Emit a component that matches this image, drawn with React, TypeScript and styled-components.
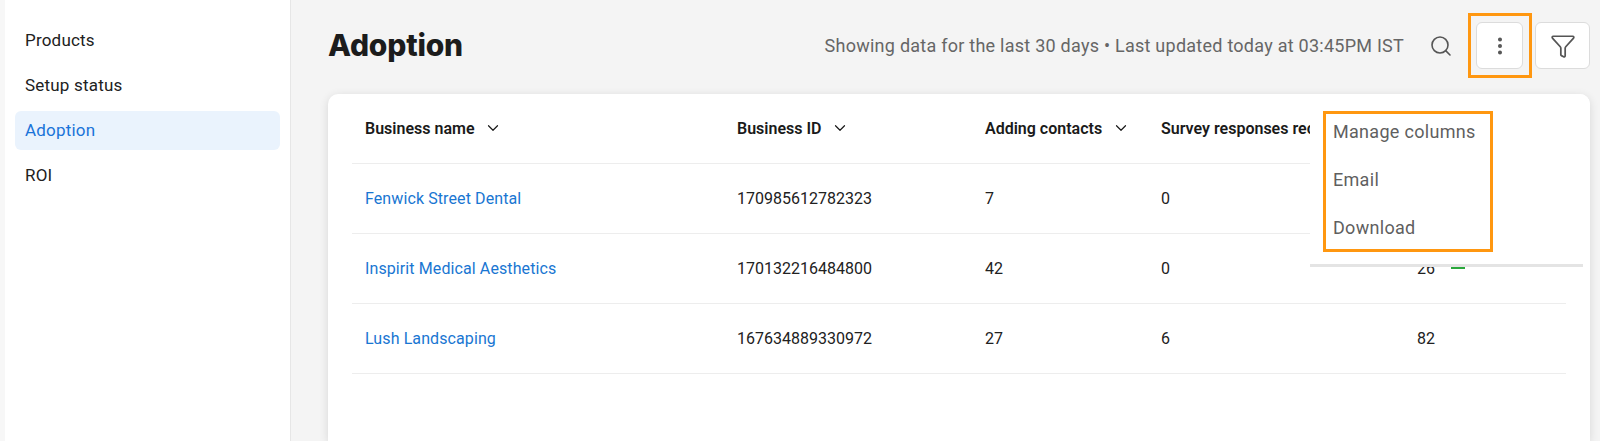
import React from "react";
import styled, { createGlobalStyle } from "styled-components";
import { Search, ChevronDown, EllipsisVertical, Funnel } from "lucide-react";

const GlobalStyle = createGlobalStyle`
  html, body {
    margin: 0;
    height: 100%;
    overflow: hidden;
    background: #f4f4f4;
    font-family: Roboto, "Liberation Sans", sans-serif;
    color: #212121;
  }
`;

const Shell = styled.div`
  display: grid;
  grid-template-columns: 291px 1fr;
  height: 441px;
  overflow: hidden;
`;

const Sidebar = styled.nav`
  display: flex;
  flex-direction: column;
  gap: 6px;
  padding: 21px 10px 0 15px;
  background: #fff;
  border-right: 1px solid #e6e6e6;
  box-shadow: inset 5px 0 0 #f7f7f7;
`;

const NavItem = styled.div<{ $active?: boolean }>`
  display: flex;
  align-items: center;
  box-sizing: border-box;
  height: 39px;
  padding: 0 0 2px 10px;
  border-radius: 6px;
  font-size: 17px;
  letter-spacing: 0.2px;
  color: ${(p) => (p.$active ? "#1a73d9" : "#212121")};
  background: ${(p) => (p.$active ? "#eaf3fd" : "transparent")};
`;

const Main = styled.main`
  display: flex;
  flex-direction: column;
  padding: 0 10px 0 37px;
  min-width: 0;
`;

const Header = styled.header`
  display: flex;
  align-items: center;
  height: 94px;
  padding-bottom: 3px;
  box-sizing: border-box;
`;

const Title = styled.h1`
  margin: -2px auto 0 0;
  font-family: Inter, sans-serif;
  font-size: 30px;
  font-weight: 800;
  letter-spacing: -0.2px;
  color: #1c1c1c;
`;

const Status = styled.span`
  font-size: 18px;
  color: #666;
  letter-spacing: 0.25px;
`;

const SearchIcon = styled(Search)`
  margin: 0 23px 0 25px;
  color: #555;
`;

const IconButton = styled.button<{ $flagged?: boolean }>`
  position: relative;
  display: flex;
  align-items: center;
  justify-content: center;
  width: ${(p) => (p.$flagged ? "47px" : "55px")};
  height: 47px;
  margin-left: ${(p) => (p.$flagged ? "0" : "12px")};
  padding: 0;
  background: #fff;
  border: 1px solid #dcdcdc;
  border-radius: 6px;
  color: #555;

  ${(p) =>
    p.$flagged &&
    `&::after {
      content: "";
      position: absolute;
      inset: -10px -10px -10px -9px;
      border: 3px solid #ff9710;
    }`}
`;

const Card = styled.section`
  position: relative;
  flex: 1;
  padding: 0 24px;
  background: #fff;
  border-radius: 10px 10px 0 0;
  box-shadow: 0 2px 10px rgba(0, 0, 0, 0.12);
  overflow: hidden;
`;

const Row = styled.div<{ $head?: boolean }>`
  display: grid;
  grid-template-columns: 372px 248px 176px 256px 1fr;
  align-items: center;
  box-sizing: content-box;
  height: 68px;
  padding: 0 0 1px 13px;
  border-bottom: 1px solid #ededed;
  font-size: 16px;
  font-weight: ${(p) => (p.$head ? 600 : 400)};
  color: ${(p) => (p.$head ? "#1a1a1a" : "#212121")};
  white-space: nowrap;
`;

const HeadCell = styled.div`
  display: flex;
  align-items: center;
  gap: 10px;
`;

/* the open menu cuts this long heading off */
const ClippedHead = styled.div`
  width: 149px;
  overflow: hidden;
`;

const BusinessLink = styled.a`
  color: #1976d2;
  letter-spacing: 0.1px;
  text-decoration: none;
`;

const TrendCell = styled.div`
  display: flex;
  align-items: center;
  gap: 16px;
`;

const TrendMark = styled.span`
  width: 14px;
  height: 10px;
  margin-top: -9px;
  background: #2aa83c;
`;

const Menu = styled.div`
  position: absolute;
  top: 0;
  right: 0;
  width: 280px;
  height: 173px;
  background: #fff;

  &::after {
    content: "";
    position: absolute;
    left: 0;
    right: 7px;
    bottom: 0;
    height: 3px;
    background: #e4e4e4;
  }
`;

const MenuList = styled.ul`
  display: flex;
  flex-direction: column;
  justify-content: center;
  gap: 28px;
  box-sizing: border-box;
  width: 170px;
  height: 141px;
  margin: 17px 0 0 13px;
  padding: 0 0 3px 7px;
  list-style: none;
  border: 3px solid #ff9710;
`;

const MenuItem = styled.li`
  font-size: 18px;
  line-height: 20px;
  letter-spacing: 0.3px;
  color: #5f5f5f;
`;

const rows = [
  { name: "Fenwick Street Dental", id: "170985612782323", contacts: "7", survey: "0" },
  { name: "Inspirit Medical Aesthetics", id: "170132216484800", contacts: "42", survey: "0", last: "26", trend: true },
  { name: "Lush Landscaping", id: "167634889330972", contacts: "27", survey: "6", last: "82" },
];

const columns = ["Business name", "Business ID", "Adding contacts"];

export default function App() {
  return (
    <>
      <GlobalStyle />
      <Shell>
        <Sidebar>
          <NavItem>Products</NavItem>
          <NavItem>Setup status</NavItem>
          <NavItem $active>Adoption</NavItem>
          <NavItem>ROI</NavItem>
        </Sidebar>
        <Main>
          <Header>
            <Title>Adoption</Title>
            <Status>Showing data for the last 30 days • Last updated today at 03:45PM IST</Status>
            <SearchIcon size={24} strokeWidth={1.6} />
            <IconButton $flagged>
              <EllipsisVertical size={22} strokeWidth={2.4} />
            </IconButton>
            <IconButton>
              <Funnel size={26} strokeWidth={1.6} />
            </IconButton>
          </Header>
          <Card>
            <Row $head>
              {columns.map((c) => (
                <HeadCell key={c}>
                  {c}
                  <ChevronDown size={18} strokeWidth={1.6} />
                </HeadCell>
              ))}
              <ClippedHead>Survey responses received</ClippedHead>
            </Row>
            {rows.map((r) => (
              <Row key={r.id}>
                <BusinessLink>{r.name}</BusinessLink>
                <div>{r.id}</div>
                <div>{r.contacts}</div>
                <div>{r.survey}</div>
                <TrendCell>
                  {r.last}
                  {r.trend && <TrendMark />}
                </TrendCell>
              </Row>
            ))}
            <Menu>
              <MenuList>
                <MenuItem>Manage columns</MenuItem>
                <MenuItem>Email</MenuItem>
                <MenuItem>Download</MenuItem>
              </MenuList>
            </Menu>
          </Card>
        </Main>
      </Shell>
    </>
  );
}
